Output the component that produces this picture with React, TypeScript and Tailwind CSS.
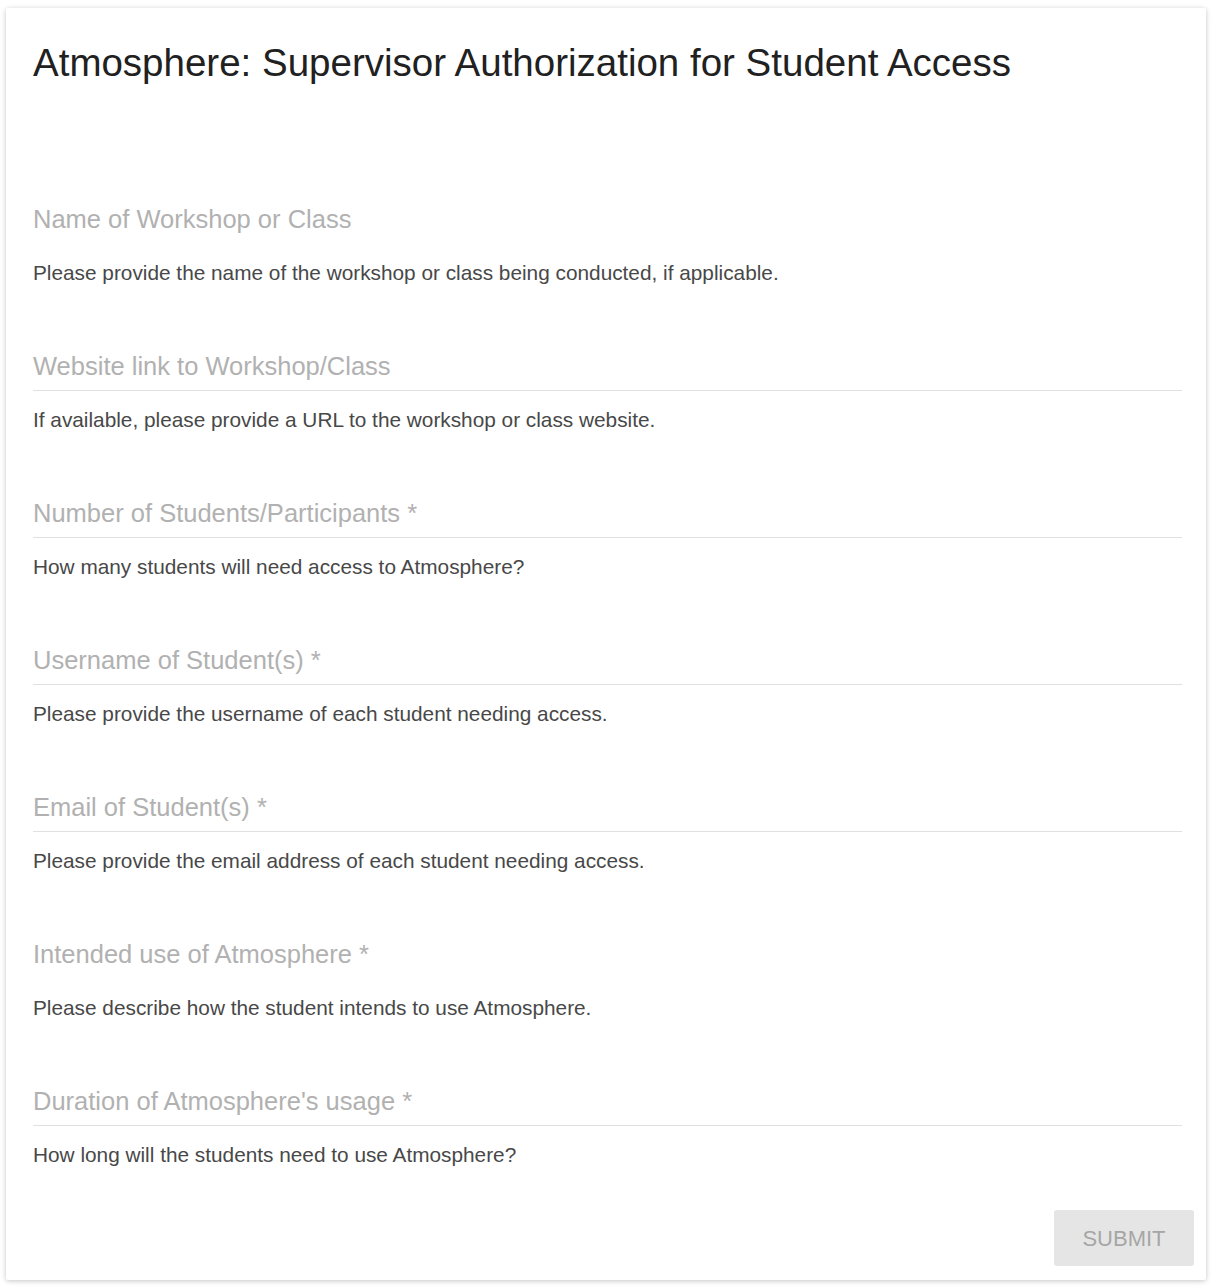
import React from "react";

const fields: { label: string; help: string; line: boolean }[] = [
  { label: "Name of Workshop or Class", help: "Please provide the name of the workshop or class being conducted, if applicable.", line: false },
  { label: "Website link to Workshop/Class", help: "If available, please provide a URL to the workshop or class website.", line: true },
  { label: "Number of Students/Participants *", help: "How many students will need access to Atmosphere?", line: true },
  { label: "Username of Student(s) *", help: "Please provide the username of each student needing access.", line: true },
  { label: "Email of Student(s) *", help: "Please provide the email address of each student needing access.", line: true },
  { label: "Intended use of Atmosphere *", help: "Please describe how the student intends to use Atmosphere.", line: false },
  { label: "Duration of Atmosphere's usage *", help: "How long will the students need to use Atmosphere?", line: true },
];

export default function App() {
  return (
    <div className="bg-white min-h-[1288px] pt-[8px] pl-[6px]" style={{ fontFamily: '"Liberation Sans", Arial, sans-serif' }}>
      <div className="w-[1200px] h-[1272px] bg-white rounded-[2px] shadow-[0_1px_6px_rgba(0,0,0,0.12),0_1px_4px_rgba(0,0,0,0.12)] flex flex-col">
        <div className="pl-[27px] pr-[24px]">
          <h1 className="text-[38.5px] leading-[40px] text-[#212121] mt-[35px]">Atmosphere: Supervisor Authorization for Student Access</h1>
          <div className="mt-[120px] flex flex-col gap-[65px]">
            {fields.map((f) => (
              <div key={f.label} className="flex flex-col">
                <div className={f.line ? "border-b border-[#e0e0e0] pb-[8px]" : "pb-[9px]"}>
                  <div className="text-[25.5px] leading-[32px] text-[#b1b1b1]">{f.label}</div>
                </div>
                <div className="mt-[17px] text-[20.8px] leading-[24px] text-[#484848]">{f.help}</div>
              </div>
            ))}
          </div>
        </div>
        <div className="flex justify-end pr-[12px] mt-[43px]">
          <button className="w-[140px] h-[56px] bg-[#e5e5e5] rounded-[3px] text-[22px] text-[#a6a6a6] uppercase">Submit</button>
        </div>
      </div>
    </div>
  );
}
